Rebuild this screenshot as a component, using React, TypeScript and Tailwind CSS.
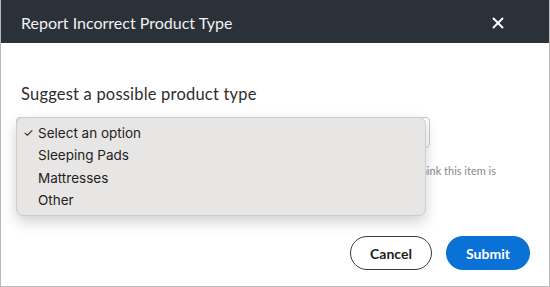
import { X } from 'lucide-react'

const options = ['Select an option', 'Sleeping Pads', 'Mattresses', 'Other']

export default function App() {
  return (
    <div className="w-[550px] h-[287px] bg-white border border-t-0 border-[#b9b9b9] flex flex-col font-['Lato',sans-serif] overflow-hidden">
      <div className="h-[43px] bg-[#2a3139] flex items-center justify-between pl-[20px] pr-[42px] pt-[2px] shrink-0">
        <h1 className="text-[16px] text-[#f1f1f1]">Report Incorrect Product Type</h1>
        <X className="w-[18px] h-[18px] text-white" strokeWidth={2.5} />
      </div>

      <div className="flex-1 flex flex-col px-[15px] pt-[39px]">
        <p className="text-[16.5px] text-[#2e2e2e] pl-[5px] tracking-[0.2px]">Suggest a possible product type</p>

        <div className="relative mt-[10px]">
          <div className="w-[414px] h-[31px] border border-[#c8c8c8] rounded-[4px] bg-white flex items-center justify-end pr-[4px]">
            <span className="text-[8px] text-[#555]">▾</span>
          </div>
          <p className="text-[11px] text-[#888] pl-[5px] mt-[16px] w-[480px] text-right leading-[14px]">
            Tell us which product type you think this item is
          </p>

          <ul className="absolute left-0 top-0 w-[410px] h-[99px] bg-[#e8e6e4] rounded-[7px] border border-[#cfcdcb] shadow-[0_6px_14px_rgba(0,0,0,0.18)] pt-[4px] font-['Inter',sans-serif] text-[13.5px] text-[#222]">
            {options.map((o, i) => (
              <li key={o} className="h-[22.5px] flex items-center relative pl-[21px]">
                {i === 0 && <span className="absolute left-[6px] text-[12px]">✓</span>}
                {o}
              </li>
            ))}
          </ul>
        </div>

        <div className="mt-auto mb-[16px] flex justify-end gap-[14px] pr-[4px]">
          <button className="w-[82px] h-[34px] rounded-full border border-[#3a3a3a] text-[14px] font-bold text-[#1d1d1d]">
            Cancel
          </button>
          <button className="w-[84px] h-[34px] rounded-full bg-[#0a71d6] text-[14px] font-bold text-white">
            Submit
          </button>
        </div>
      </div>
    </div>
  )
}
